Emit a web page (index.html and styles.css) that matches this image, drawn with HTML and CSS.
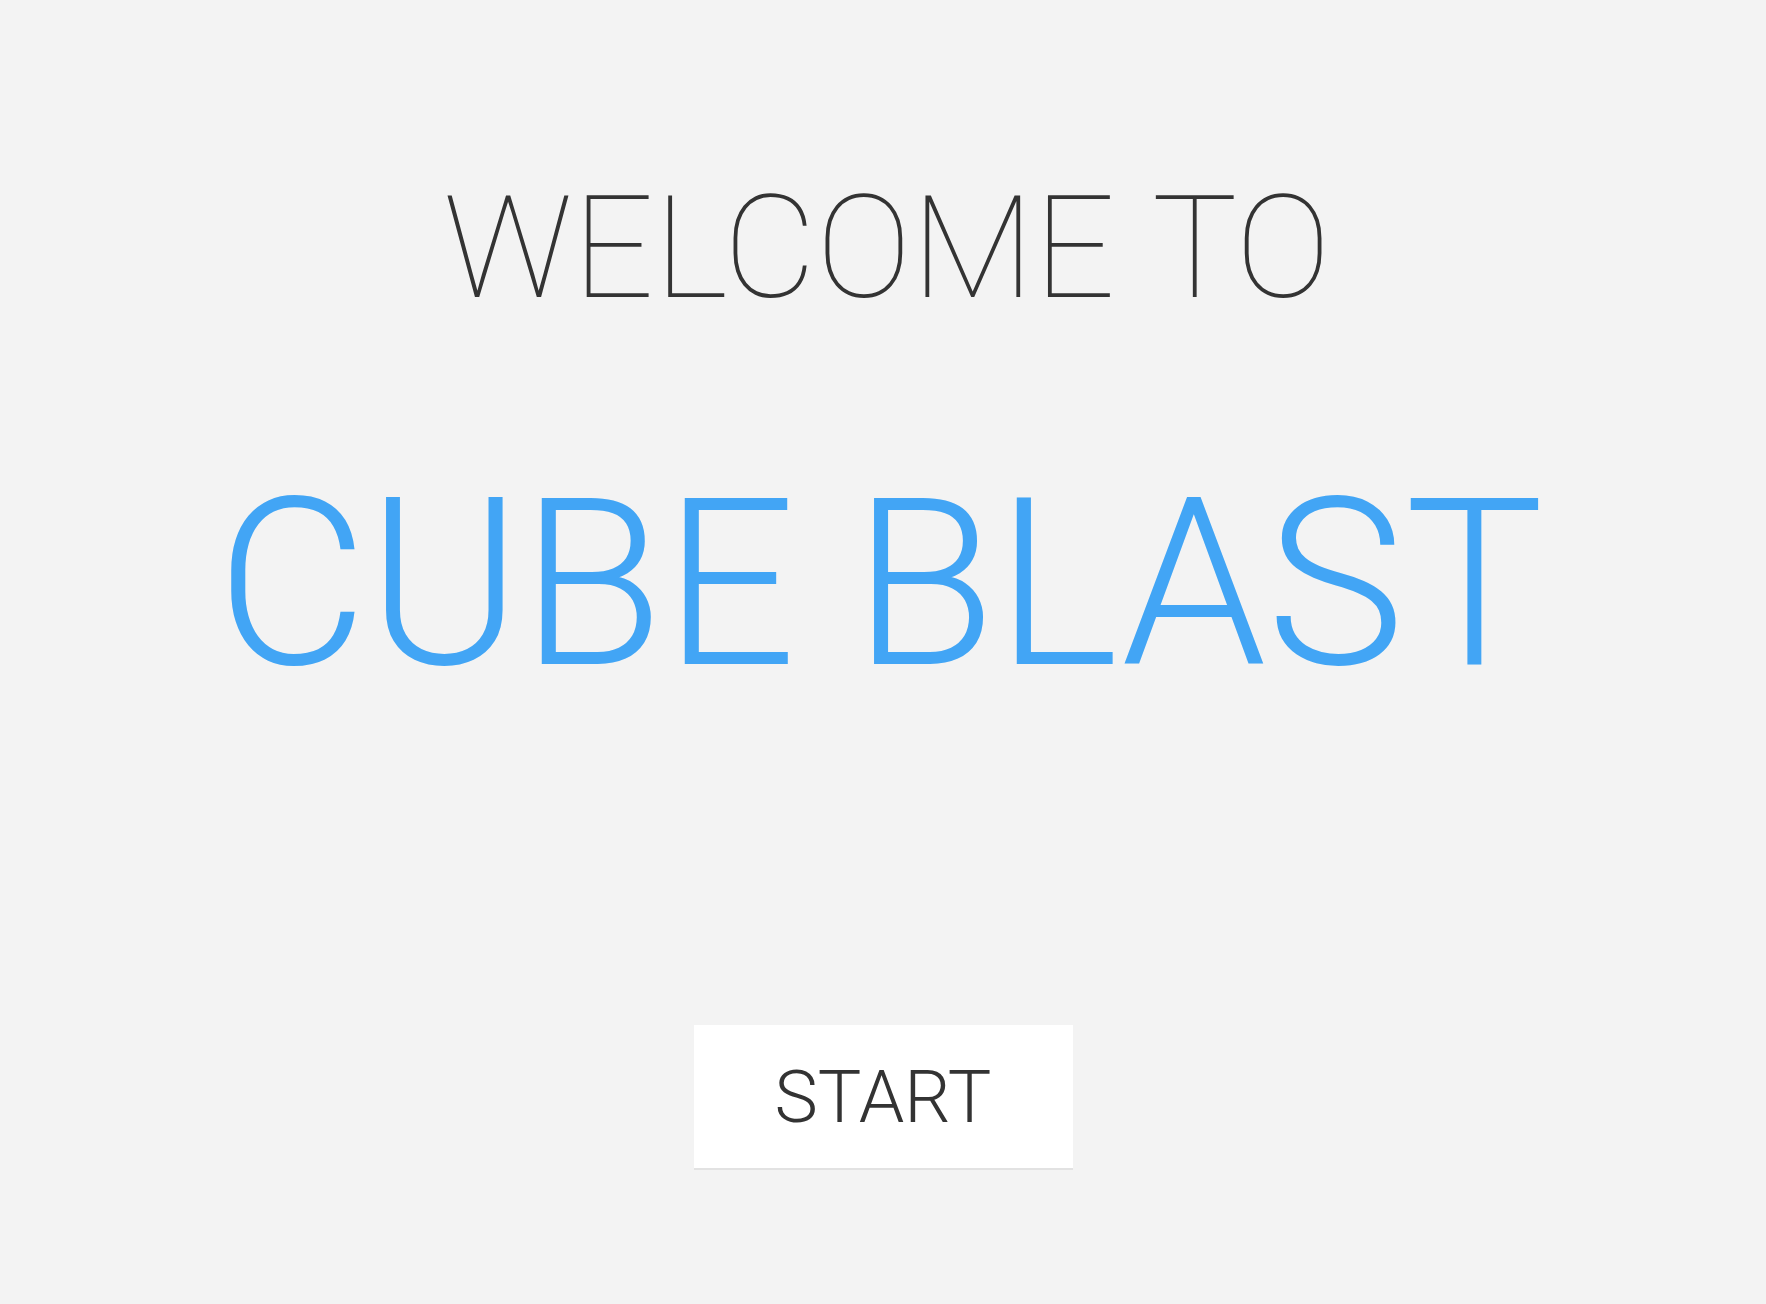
FILE: index.html
```html
<!DOCTYPE html>
<html lang="en">
<head>
<meta charset="utf-8">
<title>Cube Blast</title>
<link rel="stylesheet" href="styles.css">
</head>
<body>
<main class="screen">
  <h2 class="welcome">WELCOME TO</h2>
  <h1 class="title">CUBE BLAST</h1>
  <button class="start" type="button">START</button>
</main>
</body>
</html>
```

FILE: styles.css
```css
html, body {
  margin: 0;
  padding: 0;
}
body {
  background: #f3f3f3;
  font-family: Roboto, "Liberation Sans", sans-serif;
  width: 1766px;
  height: 1304px;
  overflow: hidden;
}
.screen {
  display: flex;
  flex-direction: column;
  align-items: center;
  padding-top: 177px;
}
.welcome {
  margin: 0 0 0 8px;
  font-size: 143px;
  line-height: 1;
  font-weight: 100;
  word-spacing: 5px;
  color: #333333;
}
.title {
  margin: 148px 6px 0 0;
  font-size: 233px;
  line-height: 1;
  font-weight: 300;
  color: #42a5f5;
}
.start {
  margin-top: 324px;
  width: 379px;
  height: 145px;
  padding: 2px 0 0;
  border: none;
  border-bottom: 2px solid #e2e2e2;
  background: #ffffff;
  font-family: Roboto, "Liberation Sans", sans-serif;
  font-size: 73px;
  font-weight: 300;
  line-height: 1;
  color: #333333;
  display: flex;
  align-items: center;
  justify-content: center;
}
```
